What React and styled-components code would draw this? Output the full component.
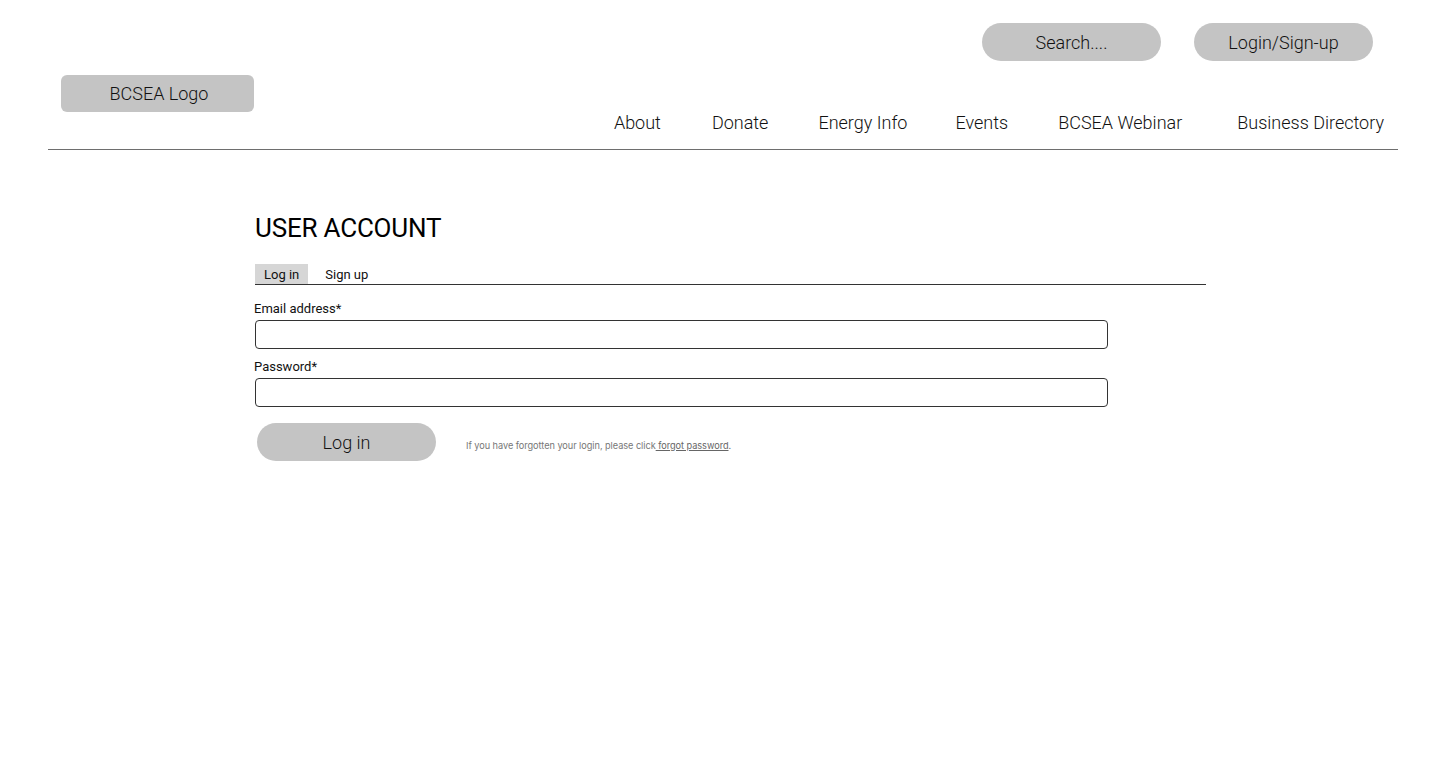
import React from "react";
import styled, { createGlobalStyle } from "styled-components";

const Global = createGlobalStyle`
  html, body { margin: 0; padding: 0; background: #fff; }
  body { font-family: Roboto, "Liberation Sans", sans-serif; color: #000; }
  * { box-sizing: border-box; }
`;

const Header = styled.header`
  margin: 0 43px 0 48px;
  border-bottom: 1px solid #6e6e6e;
`;

const TopBar = styled.div`
  display: flex;
  justify-content: flex-end;
  gap: 33px;
  padding: 23px 25px 0 0;
`;

const Pill = styled.button`
  width: 179px;
  height: 38px;
  border: none;
  border-radius: 19px;
  background: #c4c4c4;
  font-family: Roboto, sans-serif;
  font-weight: 300;
  font-size: 18px;
  color: #111;
  padding: 0;
  cursor: pointer;
`;

const NavRow = styled.div`
  display: flex;
  justify-content: space-between;
  align-items: flex-end;
  padding: 14px 14px 0 13px;
`;

const Logo = styled.div`
  width: 193px;
  height: 37px;
  margin-bottom: 37px;
  padding-left: 3px;
  border-radius: 6px;
  background: #c4c4c4;
  display: flex;
  align-items: center;
  justify-content: center;
  font-weight: 300;
  font-size: 18px;
  color: #111;
`;

const Nav = styled.nav`
  display: flex;
  padding-bottom: 16px;
`;

const NavLink = styled.a`
  font-weight: 300;
  font-size: 18px;
  line-height: 21px;
  color: #111;
  text-decoration: none;
  margin-left: ${(p) => p.$gap}px;
`;

const Main = styled.main`
  padding: 63px 0 0 255px;
`;

const Title = styled.h1`
  margin: 0;
  font-weight: 400;
  font-size: 26px;
  line-height: 30px;
  letter-spacing: -0.2px;
  color: #000;
`;

const Tabs = styled.div`
  display: flex;
  width: 951px;
  margin-top: 21px;
  border-bottom: 1px solid #333;
`;

const Tab = styled.div`
  height: 20px;
  padding: 0 ${(p) => (p.$active ? "9px" : "17px")};
  background: ${(p) => (p.$active ? "#d6d6d6" : "transparent")};
  font-size: 13px;
  line-height: 21px;
  color: #111;
`;

const Label = styled.label`
  display: block;
  margin: ${(p) => p.$top}px 0 3px -1px;
  font-size: 13px;
  line-height: 16px;
  color: #111;
`;

const Input = styled.input`
  display: block;
  width: 853px;
  height: 29px;
  border: 1px solid #333;
  border-radius: 4px;
  background: #fff;
  outline: none;
`;

const Actions = styled.div`
  display: flex;
  align-items: center;
  gap: 30px;
  margin: 16px 0 0 2px;
`;

const Help = styled.p`
  margin: 6px 0 0;
  font-family: Inter, Roboto, sans-serif;
  font-size: 9.2px;
  letter-spacing: -0.05px;
  color: #777;
`;

const HelpLink = styled.a`
  color: #666;
  text-decoration: underline;
`;

const navItems = [
  ["About", 0],
  ["Donate", 51],
  ["Energy Info", 50],
  ["Events", 48],
  ["BCSEA Webinar", 50],
  ["Business Directory", 55],
];

export default function App() {
  return (
    <>
      <Global />
      <Header>
        <TopBar>
          <Pill>Search....</Pill>
          <Pill>Login/Sign-up</Pill>
        </TopBar>
        <NavRow>
          <Logo>BCSEA Logo</Logo>
          <Nav>
            {navItems.map(([t, g]) => (
              <NavLink key={t} href="#" $gap={g}>
                {t}
              </NavLink>
            ))}
          </Nav>
        </NavRow>
      </Header>
      <Main>
        <Title>USER ACCOUNT</Title>
        <Tabs>
          <Tab $active>Log in</Tab>
          <Tab>Sign up</Tab>
        </Tabs>
        <Label $top={16}>Email address*</Label>
        <Input type="email" />
        <Label $top={10}>Password*</Label>
        <Input type="password" />
        <Actions>
          <Pill>Log in</Pill>
          <Help>
            If you have forgotten your login, please click
            <HelpLink href="#"> forgot password</HelpLink>.
          </Help>
        </Actions>
      </Main>
    </>
  );
}
